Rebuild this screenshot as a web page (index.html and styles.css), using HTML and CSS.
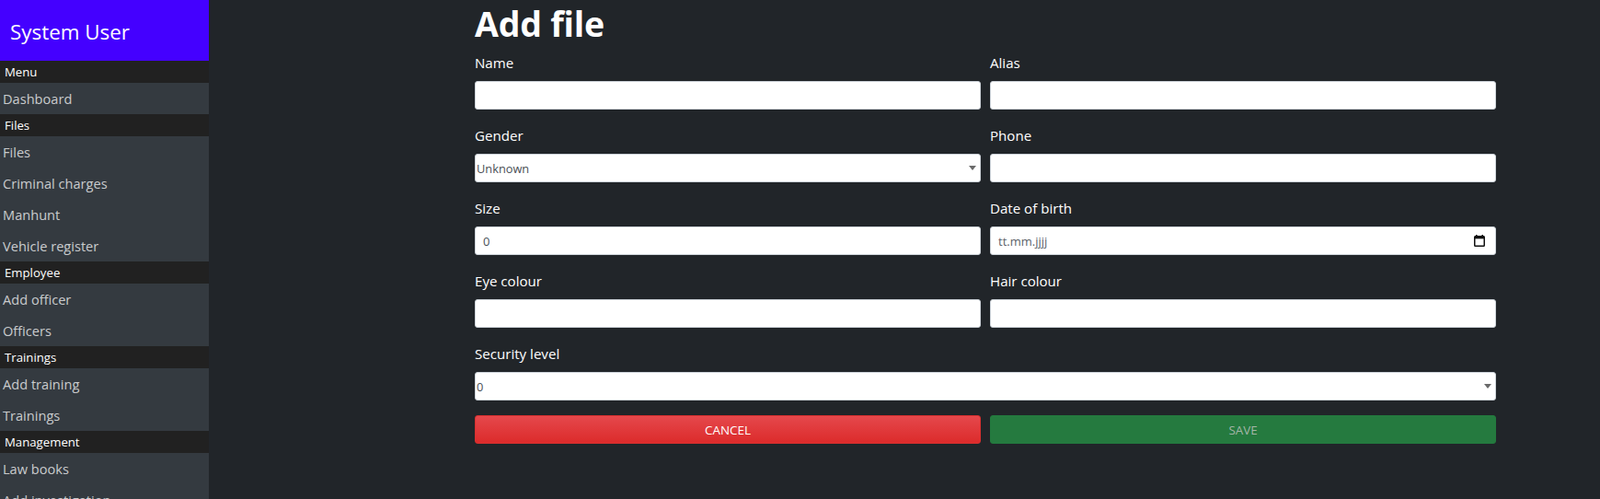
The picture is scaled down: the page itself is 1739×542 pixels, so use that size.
FILE: index.html
```html
<!DOCTYPE html>
<html lang="en">
<head>
<meta charset="utf-8">
<title>Add file</title>
<link rel="stylesheet" href="styles.css">
</head>
<body>
<aside class="sidebar">
  <div class="brand">System User</div>
  <div class="nav-head">Menu</div>
  <a class="nav-item">Dashboard</a>
  <div class="nav-head">Files</div>
  <a class="nav-item">Files</a>
  <a class="nav-item">Criminal charges</a>
  <a class="nav-item">Manhunt</a>
  <a class="nav-item">Vehicle register</a>
  <div class="nav-head">Employee</div>
  <a class="nav-item">Add officer</a>
  <a class="nav-item">Officers</a>
  <div class="nav-head">Trainings</div>
  <a class="nav-item">Add training</a>
  <a class="nav-item">Trainings</a>
  <div class="nav-head">Management</div>
  <a class="nav-item">Law books</a>
  <a class="nav-item">Add investigation</a>
  <a class="nav-item">Investigations</a>
</aside>
<main class="main">
  <div class="container">
    <h1 class="title">Add file</h1>
    <form class="form-grid">
      <div class="form-group">
        <label class="label">Name</label>
        <input class="control" type="text">
      </div>
      <div class="form-group">
        <label class="label">Alias</label>
        <input class="control" type="text">
      </div>
      <div class="form-group">
        <label class="label">Gender</label>
        <div class="select-wrap">
          <select class="control select"><option>Unknown</option><option>Male</option><option>Female</option></select>
        </div>
      </div>
      <div class="form-group">
        <label class="label">Phone</label>
        <input class="control" type="text">
      </div>
      <div class="form-group">
        <label class="label">Size</label>
        <input class="control" type="text" value="0">
      </div>
      <div class="form-group">
        <label class="label">Date of birth</label>
        <div class="date-wrap">
          <input class="control date" type="text" placeholder="tt.mm.jjjj">
          <svg class="cal-icon" width="12" height="13" viewBox="0 0 12 13" aria-hidden="true">
            <rect x="2" y="0" width="1.6" height="2.5" fill="#111"/>
            <rect x="8.4" y="0" width="1.6" height="2.5" fill="#111"/>
            <rect x="0.75" y="1.75" width="10.5" height="10.5" rx="0.8" fill="none" stroke="#111" stroke-width="1.5"/>
            <rect x="0.75" y="1.75" width="10.5" height="2.6" fill="#111"/>
          </svg>
        </div>
      </div>
      <div class="form-group">
        <label class="label">Eye colour</label>
        <input class="control" type="text">
      </div>
      <div class="form-group">
        <label class="label">Hair colour</label>
        <input class="control" type="text">
      </div>
      <div class="form-group span-2">
        <label class="label">Security level</label>
        <div class="select-wrap">
          <select class="control select"><option>0</option><option>1</option><option>2</option></select>
        </div>
      </div>
      <button type="button" class="btn btn-cancel">CANCEL</button>
      <button type="button" class="btn btn-save">SAVE</button>
    </form>
  </div>
</main>
</body>
</html>
```
FILE: styles.css
```css
* { box-sizing: border-box; }

html, body {
  margin: 0;
  height: 100%;
}

body {
  display: flex;
  background: #212529;
  font-family: "Open Sans", "Noto Sans", sans-serif;
  overflow: hidden;
}

.sidebar {
  width: 227px;
  flex: 0 0 227px;
  height: 100vh;
  overflow: hidden;
  background: #343a40;
  display: flex;
  flex-direction: column;
}

.brand {
  height: 66px;
  flex: 0 0 66px;
  background: #4400ff;
  color: #fff;
  font-size: 22.4px;
  display: flex;
  align-items: center;
  padding-left: 11px;
  padding-top: 2px;
}

.nav-head {
  height: 24px;
  flex: 0 0 24px;
  background: #212121;
  color: #fff;
  font-size: 13.2px;
  line-height: 24px;
  padding-left: 5px;
}

.nav-item {
  display: block;
  height: 34px;
  flex: 0 0 34px;
  line-height: 34px;
  color: #c9cbcd;
  font-size: 14.6px;
  padding-left: 3px;
}

.main {
  flex: 1;
}

.container {
  width: 1110px;
  margin-left: 289px;
}

.title {
  margin: 0 0 8px;
  padding-top: 4px;
  color: #fff;
  font-size: 37.5px;
  font-weight: 700;
  line-height: 44px;
  letter-spacing: -0.2px;
}

.form-grid {
  display: grid;
  grid-template-columns: 1fr 1fr;
  column-gap: 10px;
}

.form-group {
  margin-bottom: 16px;
}

.span-2 {
  grid-column: 1 / span 2;
}

.label {
  display: block;
  color: #fff;
  font-size: 15.1px;
  line-height: 24px;
  margin-bottom: 8px;
}

.control {
  display: block;
  width: 100%;
  height: 31px;
  padding: 0 8px;
  border: 1px solid #ced4da;
  border-radius: 3px;
  background: #fff;
  color: #495057;
  font-family: "Open Sans", "Noto Sans", sans-serif;
  font-size: 13px;
  outline: none;
}

.select-wrap,
.date-wrap {
  position: relative;
}

.select {
  -webkit-appearance: none;
  appearance: none;
  padding: 0 20px 0 1px;
  font-size: 12.8px;
  color: #4a4f55;
}

.select-wrap::after {
  content: "";
  position: absolute;
  right: 5px;
  top: 13px;
  border-left: 4px solid transparent;
  border-right: 4px solid transparent;
  border-top: 5px solid #6a6a6a;
}

.date::placeholder {
  color: #5c636a;
  opacity: 1;
}

.cal-icon {
  position: absolute;
  right: 12px;
  top: 9px;
}

.btn {
  height: 31px;
  border-radius: 3px;
  font-family: "Open Sans", "Noto Sans", sans-serif;
  font-size: 13.4px;
  cursor: pointer;
}

.btn-cancel {
  border: 1px solid #d9302f;
  background: linear-gradient(#e5484c, #dc2b2b);
  color: #fff;
}

.btn-save {
  border: 1px solid #237a3e;
  background: #257a3f;
  color: #a4b5a8;
}
```
